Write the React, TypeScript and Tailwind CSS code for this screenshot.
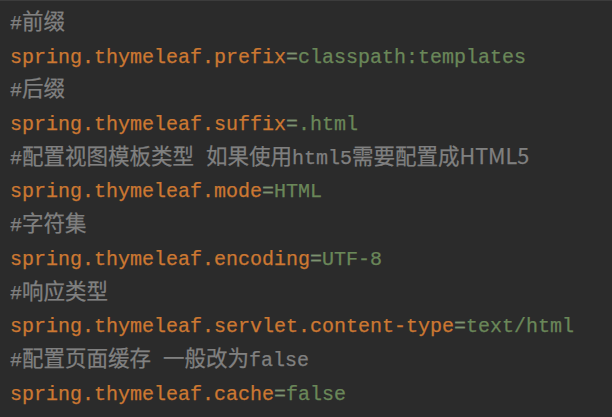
const mono = "font-['Liberation_Mono','Noto_Sans_CJK_SC',monospace]";

type Line =
  | { kind: 'comment'; text: string; tail?: string }
  | { kind: 'prop'; key: string; value: string };

const lines: Line[] = [
  { kind: 'comment', text: '#前缀' },
  { kind: 'prop', key: 'spring.thymeleaf.prefix', value: 'classpath:templates' },
  { kind: 'comment', text: '#后缀' },
  { kind: 'prop', key: 'spring.thymeleaf.suffix', value: '.html' },
  { kind: 'comment', text: '#配置视图模板类型 如果使用html5需要配置成', tail: 'HTML5' },
  { kind: 'prop', key: 'spring.thymeleaf.mode', value: 'HTML' },
  { kind: 'comment', text: '#字符集' },
  { kind: 'prop', key: 'spring.thymeleaf.encoding', value: 'UTF-8' },
  { kind: 'comment', text: '#响应类型' },
  { kind: 'prop', key: 'spring.thymeleaf.servlet.content-type', value: 'text/html' },
  { kind: 'comment', text: '#配置页面缓存 一般改为false' },
  { kind: 'prop', key: 'spring.thymeleaf.cache', value: 'false' },
];

// split comment into CJK runs and ascii runs
function Comment({ text, tail }: { text: string; tail?: string }) {
  const parts = text.split(/([\u4e00-\u9fff]+)/).filter(Boolean);
  return (
    <div className="h-[33.7px] text-[#808080]">
      {parts.map((p, i) =>
        /[\u4e00-\u9fff]/.test(p) ? (
          <span key={i} className="text-[21.5px] leading-none font-['Noto_Sans_CJK_SC',sans-serif]">
            {p}
          </span>
        ) : (
          <span key={i}>{p}</span>
        )
      )}
      {tail && (
        <span className="text-[21.5px] leading-none font-['Noto_Sans_CJK_SC',sans-serif]">{tail}</span>
      )}
    </div>
  );
}

export default function App() {
  return (
    <div className="w-[612px] h-[417px] bg-[#2b2b2b] border-t border-[#3c3c3c] overflow-hidden">
      <div
        className={`${mono} text-[20px] leading-[33.7px] pl-[10px] pt-[6px] whitespace-pre [-webkit-text-stroke:0.25px]`}
      >
        {lines.map((line, i) =>
          line.kind === 'comment' ? (
            <Comment key={i} text={line.text} tail={line.tail} />
          ) : (
            <div key={i} className="h-[33.7px]">
              <span className="text-[#cc7832]">{line.key}</span>
              <span className="text-[#7d9270]">=</span>
              <span className="text-[#6a8759]">{line.value}</span>
            </div>
          )
        )}
      </div>
    </div>
  );
}
